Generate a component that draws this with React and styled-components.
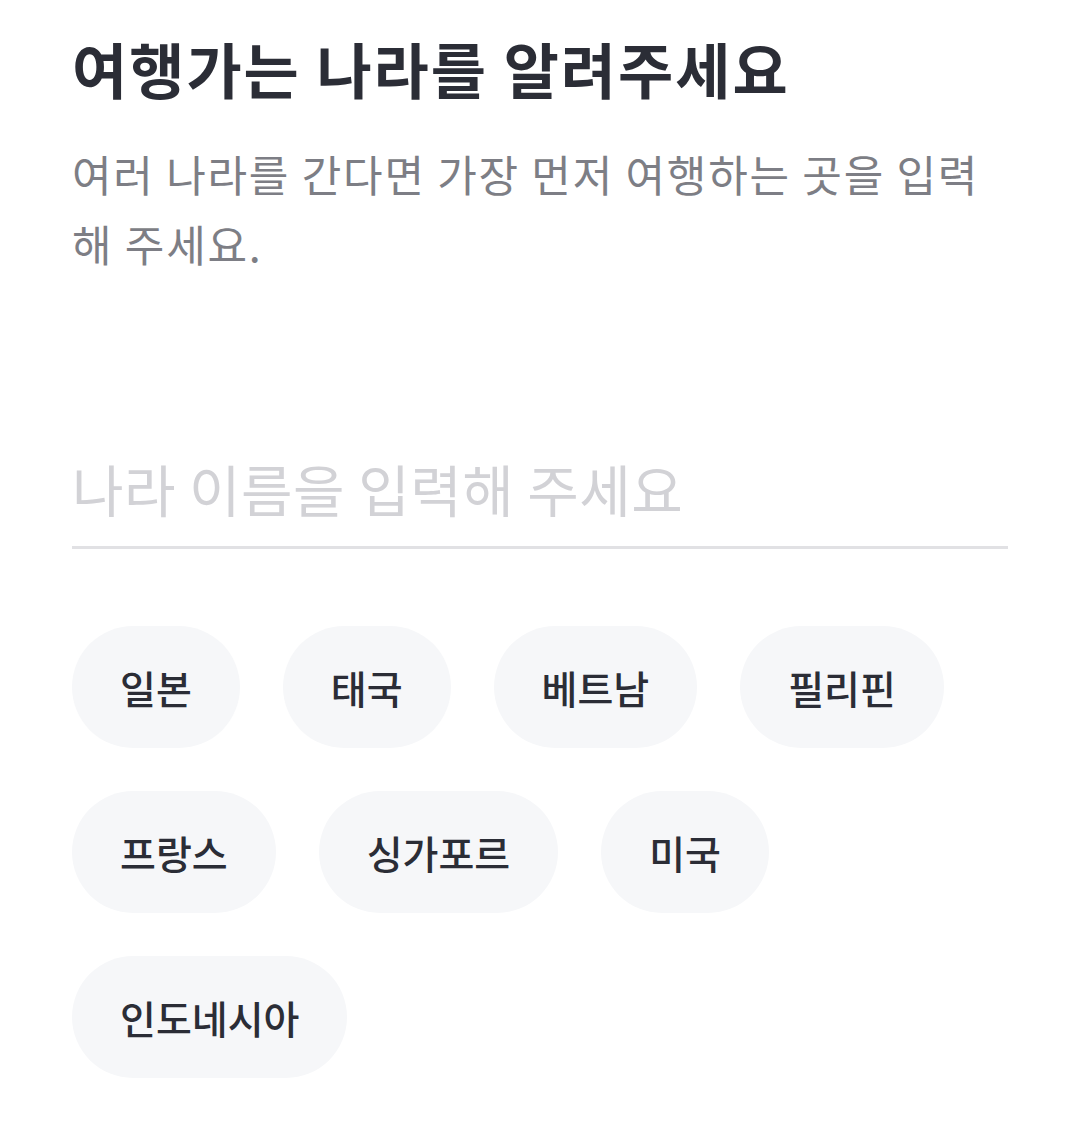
import React, { useState } from "react";
import styled, { createGlobalStyle } from "styled-components";

const GlobalStyle = createGlobalStyle`
  * {
    box-sizing: border-box;
  }
  body {
    margin: 0;
    background: #ffffff;
    font-family: "Noto Sans CJK KR", "Noto Sans", sans-serif;
  }
`;

const countries = [
  "일본",
  "태국",
  "베트남",
  "필리핀",
  "프랑스",
  "싱가포르",
  "미국",
  "인도네시아"
];

export default function App() {
  const [country, setCountry] = useState("");

  return (
    <Page>
      <GlobalStyle />
      <Title>여행가는 나라를 알려주세요</Title>
      <Description>
        여러 나라를 간다면 가장 먼저 여행하는 곳을 입력해 주세요.
      </Description>
      <CountryInput
        value={country}
        onChange={e => setCountry(e.target.value)}
        placeholder="나라 이름을 입력해 주세요"
      />
      <ChipList>
        {countries.map(name => (
          <Chip key={name} type="button" onClick={() => setCountry(name)}>
            {name}
          </Chip>
        ))}
      </ChipList>
    </Page>
  );
}

const Page = styled.main`
  display: flex;
  flex-direction: column;
  padding: 28px 72px 40px;
`;

const Title = styled.h1`
  margin: 0;
  font-size: 60px;
  line-height: 80px;
  font-weight: 700;
  color: #2b2d36;
  letter-spacing: 2px;
`;

const Description = styled.p`
  margin: 30px 0 0;
  font-size: 43px;
  line-height: 70px;
  font-weight: 400;
  color: #7d7e85;
  letter-spacing: 1.8px;
  word-break: break-all;
`;

const CountryInput = styled.input`
  display: block;
  width: 100%;
  height: 102px;
  margin-top: 169px;
  padding: 0 0 19px;
  border: none;
  border-bottom: 3px solid #e1e1e4;
  outline: none;
  background: transparent;
  font-family: inherit;
  font-size: 56px;
  letter-spacing: 0.5px;
  color: #2b2d36;

  &::placeholder {
    color: #d2d2d6;
  }
`;

const ChipList = styled.div`
  display: flex;
  flex-wrap: wrap;
  gap: 43px 43px;
  margin-top: 77px;
`;

const Chip = styled.button`
  height: 122px;
  padding: 0 48px;
  border: none;
  border-radius: 61px;
  background: #f6f7f9;
  font-family: inherit;
  font-size: 39px;
  font-weight: 500;
  color: #2b2d36;
  cursor: pointer;
`;
